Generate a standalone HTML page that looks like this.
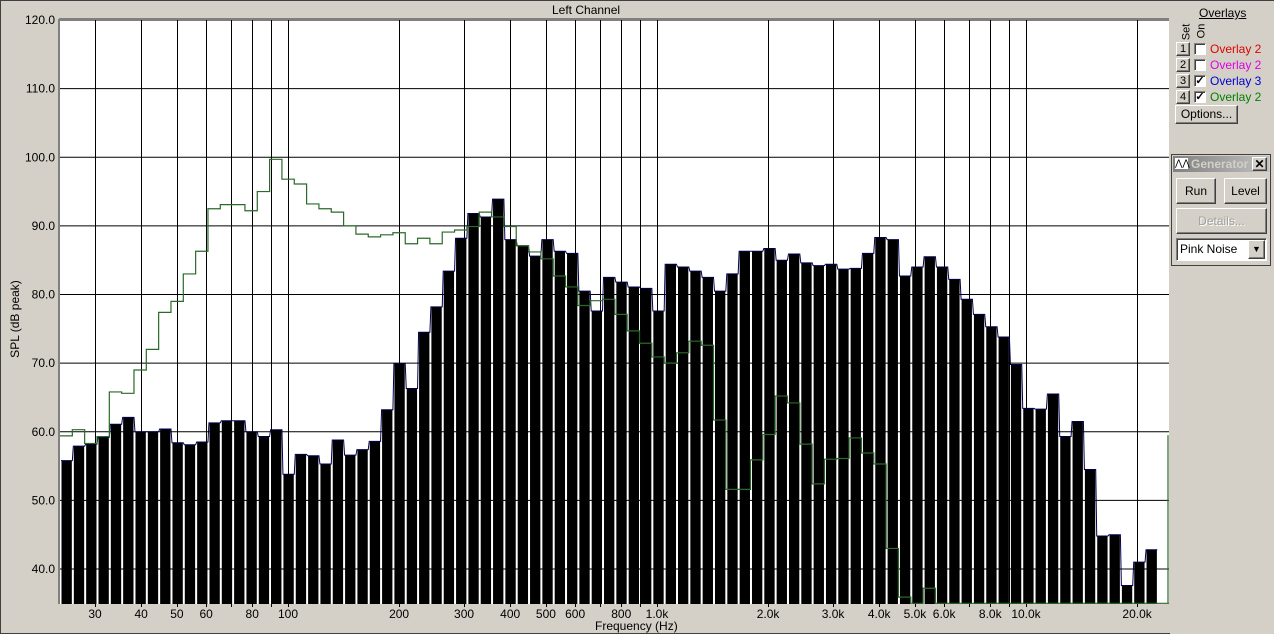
<!DOCTYPE html>
<html><head><meta charset="utf-8"><style>
body{margin:0;width:1274px;height:637px;overflow:hidden;background:#d4d0c8;font-family:"Liberation Sans",sans-serif;font-size:12px;position:relative}
.a{position:absolute;white-space:nowrap}
.btn{position:absolute;background:#d4d0c8;border:1px solid;border-color:#fff #404040 #404040 #fff;box-shadow:inset -1px -1px 0 #808080;text-align:center;box-sizing:border-box}
.cb{position:absolute;width:12px;height:12px;background:#fff;border:1px solid;border-color:#808080 #fff #fff #808080;box-shadow:inset 1px 1px 0 #404040;box-sizing:border-box;font-size:11px;line-height:11px;text-align:center;font-weight:bold}
</style></head><body>
<div class="a" style="left:0;top:0;width:1274px;height:1px;background:#404040"></div>
<div class="a" style="left:0;top:0;width:1px;height:634px;background:#404040"></div>
<div class="a" style="left:0;top:633px;width:1170px;height:1px;background:#404040"></div>
<div class="a" style="left:0;top:634px;width:1274px;height:3px;background:#fff"></div>
<div class="a" style="left:552px;top:3px">Left Channel</div>
<svg id="s" class="a" style="left:0;top:0" width="1274" height="637"></svg>
<div class="a" style="left:-30px;top:312px;width:90px;text-align:center;transform:rotate(-90deg)">SPL (dB peak)</div>
<div class="a" style="left:595px;top:619px">Frequency (Hz)</div>

<div class="a" style="left:1199px;top:6px;text-decoration:underline">Overlays</div>
<div class="a" style="left:1178px;top:26px;transform:rotate(-90deg);font-size:11px">Set</div>
<div class="a" style="left:1194px;top:25px;transform:rotate(-90deg);font-size:11px">On</div>
<div class="btn" style="left:1176px;top:42px;width:14px;height:14px;font-size:11px;line-height:12px">1</div>
<div class="btn" style="left:1176px;top:58px;width:14px;height:14px;font-size:11px;line-height:12px">2</div>
<div class="btn" style="left:1176px;top:74px;width:14px;height:14px;font-size:11px;line-height:12px">3</div>
<div class="btn" style="left:1176px;top:90px;width:14px;height:14px;font-size:11px;line-height:12px">4</div>
<div class="cb" style="left:1194px;top:43px"></div>
<div class="cb" style="left:1194px;top:59px"></div>
<div class="cb" style="left:1194px;top:75px">✓</div>
<div class="cb" style="left:1194px;top:91px">✓</div>
<div class="a" style="left:1210px;top:42px;color:#e00000">Overlay 2</div>
<div class="a" style="left:1210px;top:58px;color:#e000e0">Overlay 2</div>
<div class="a" style="left:1210px;top:74px;color:#0000d0">Overlay 3</div>
<div class="a" style="left:1210px;top:90px;color:#008000">Overlay 2</div>
<div class="btn" style="left:1175px;top:105px;width:63px;height:19px;line-height:17px">Options...</div>

<div class="a" style="left:1171px;top:154px;width:100px;height:112px;border:1px solid #404040;box-sizing:border-box;background:#d4d0c8"></div>
<div class="a" style="left:1173px;top:156px;width:96px;height:16px;background:linear-gradient(90deg,#808080,#c0c0c0)"></div>
<div class="a" style="left:1175px;top:158px;width:13px;height:11px;background:#fff;font-size:9px;line-height:11px;color:#000">⋀⋀</div>
<div class="a" style="left:1191px;top:157px;color:#d4d0c8;font-weight:bold">Generator</div>
<div class="btn" style="left:1252px;top:157px;width:15px;height:14px;font-size:12px;line-height:12px;font-weight:bold">✕</div>
<div class="btn" style="left:1176px;top:178px;width:40px;height:26px;line-height:24px">Run</div>
<div class="btn" style="left:1224px;top:178px;width:43px;height:26px;line-height:24px">Level</div>
<div class="btn" style="left:1176px;top:208px;width:91px;height:26px;line-height:24px;color:#a0a0a0;text-shadow:1px 1px #fff">Details...</div>
<div class="a" style="left:1176px;top:238px;width:91px;height:23px;background:#fff;border:1px solid;border-color:#808080 #fff #fff #808080;box-shadow:inset 1px 1px 0 #404040;box-sizing:border-box;line-height:21px;padding-left:3px">Pink Noise</div>
<div class="btn" style="left:1248px;top:240px;width:17px;height:19px;font-size:9px;line-height:17px">▼</div>

<script>
var bars=[55.8,57.9,58.2,59.2,61.1,62.1,60,60,60.4,58.4,58.1,58.5,61.3,61.6,61.6,60,59.3,60.3,53.8,56.7,56.5,55.3,58.8,56.6,57.4,58.6,63.2,69.9,66.3,74.5,78.2,83.4,88.2,91.8,91.3,93.9,88,87.1,85.6,88,86.3,86,80.5,77.6,82.5,81.8,81.1,80.9,77.6,84.4,84,83.4,82.5,80.5,83,86.3,86.3,86.7,85,85.9,84.6,84.2,84.4,83.7,83.8,86,88.3,88,82.7,84,85.5,84,82.2,79.3,77.1,75.3,73.8,69.8,63.4,63.3,65.5,59.3,61.5,54.5,44.8,45,37.6,41,42.8];
var gr=[59.4,60.3,58.3,59.3,65.8,65.6,69,72,77.4,79,83,86.3,92.5,93.1,93.1,92.2,95,99.7,96.8,96.1,93.2,92.5,92,90,88.8,88.4,88.7,89,87.4,88.2,87.4,89.1,89.4,89.9,92,91.3,89.9,87.1,86.2,85.2,82.7,81.1,78.4,79.1,79.3,77.1,74.7,72.9,70.9,70,71.5,73.2,72.6,61.7,51.6,51.6,55.9,59.6,65.2,64.2,58.2,52.4,56,56.1,59.1,56.9,55.3,43,35.9,35,37.2];
while(gr.length<90)gr.push(35);
function Y(d){return 20+(120-d)*6.8625;}
function X(f){return 288+369*Math.log10(f/100);}
var L=60,R=1169,T=20,B=604,bw=12.33,h='';
h+='<rect x="'+L+'" y="'+T+'" width="'+(R-L)+'" height="'+(B-T)+'" fill="#fff"/>';
for(var d=40;d<=120;d+=10){var y=Y(d);h+='<line x1="'+L+'" x2="'+R+'" y1="'+y+'" y2="'+y+'" stroke="#000"/>';h+='<text x="55" y="'+(y+4)+'" text-anchor="end" font-size="12" font-family="Liberation Sans">'+d.toFixed(1)+'</text>';}
var fs=[];[10,100,1000,10000].forEach(function(m){for(var i=1;i<10;i++)fs.push(i*m);});fs.push(20000);
fs.forEach(function(f){var x=Math.round(X(f))+.5;if(x>L+1&&x<R){h+='<line x1="'+x+'" x2="'+x+'" y1="'+T+'" y2="'+(B+3)+'" stroke="#000"/>';}});
var labs={30:'30',40:'40',50:'50',60:'60',80:'80',100:'100',200:'200',300:'300',400:'400',500:'500',600:'600',800:'800',1000:'1.0k',2000:'2.0k',3000:'3.0k',4000:'4.0k',5000:'5.0k',6000:'6.0k',8000:'8.0k',10000:'10.0k',20000:'20.0k'};
for(var k in labs){h+='<text x="'+X(+k)+'" y="618" text-anchor="middle" font-size="12" font-family="Liberation Sans">'+labs[k]+'</text>';}
var tp='';
bars.forEach(function(v,i){var x=L+i*bw,y=Y(v);h+='<rect x="'+(x+1.5)+'" y="'+y+'" width="'+(bw-2)+'" height="'+(B-y)+'" fill="#000"/>';tp+=(i?' L':'M')+(x+1)+' '+y+' L'+(x+bw)+' '+y;});
h+='<path d="'+tp+'" fill="none" stroke="#000050" stroke-width="1"/>';
var p='M'+L+' '+Y(gr[0]);gr.forEach(function(v,i){var x=L+i*bw;p+=' L'+x+' '+Y(v)+' L'+Math.min(R,x+bw)+' '+Y(v);});
p+=' L1168 '+Y(35)+' L1168 '+Y(59.5);
h+='<path d="'+p+'" fill="none" stroke="#2a6a2a" stroke-width="1.2"/>';
h+='<line x1="'+(L-1)+'" y1="'+(T-1)+'" x2="'+(L-1)+'" y2="'+B+'" stroke="#808080" stroke-width="2"/>';
h+='<line x1="'+(L-1)+'" y1="'+(T-1)+'" x2="'+R+'" y2="'+(T-1)+'" stroke="#808080" stroke-width="2"/>';
document.getElementById('s').innerHTML=h;
</script>
</body></html>
